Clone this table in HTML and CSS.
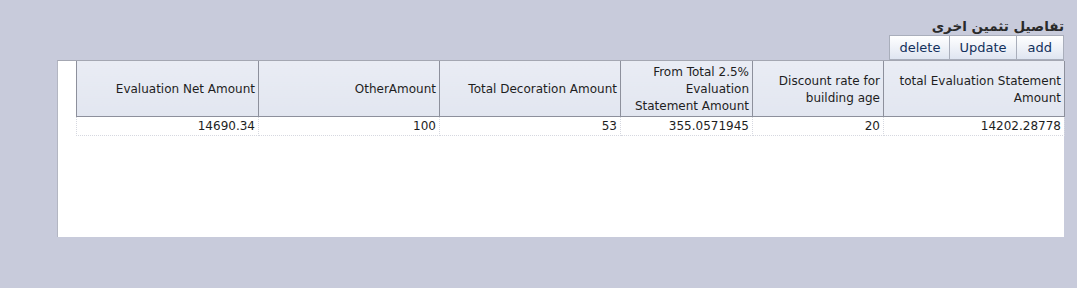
FILE: index.html
```html
<!DOCTYPE html>
<html lang="en">
<head>
    <meta charset="UTF-8">
    <meta name="viewport" content="width=device-width, initial-scale=1.0">
    <link rel="stylesheet" href="styles.css">
    <title>Evaluation Details</title>
</head>
<body>
    <div class="top-section">
        <div class="section-title" dir="rtl">تفاصيل تثمين اخرى</div>
        <div class="actions">
            <button class="action-btn">delete</button>
            <button class="action-btn">Update</button>
            <button class="action-btn">add</button>
        </div>
    </div>
    <div class="grid-panel">
        <table class="details-table">
            <colgroup>
                <col style="width: 182px">
                <col style="width: 181px">
                <col style="width: 181px">
                <col style="width: 132px">
                <col style="width: 131px">
                <col style="width: 181px">
            </colgroup>
            <thead>
                <tr>
                    <th>Evaluation Net Amount</th>
                    <th>OtherAmount</th>
                    <th>Total Decoration Amount</th>
                    <th>From Total 2.5% Evaluation Statement Amount</th>
                    <th>Discount rate for building age</th>
                    <th>total Evaluation Statement Amount</th>
                </tr>
            </thead>
            <tbody>
                <tr>
                    <td>14690.34</td>
                    <td>100</td>
                    <td>53</td>
                    <td>355.0571945</td>
                    <td>20</td>
                    <td>14202.28778</td>
                </tr>
            </tbody>
        </table>
    </div>
</body>
</html>
```

FILE: styles.css
```css
body {
    margin: 0;
    background-color: #c8cbdb;
    font-family: Tahoma, "DejaVu Sans", sans-serif;
    color: #1e1e1e;
}

.top-section {
    display: flex;
    flex-direction: column;
    align-items: flex-end;
    padding: 17px 13px 0 0;
}

.section-title {
    font-family: "DejaVu Sans", sans-serif;
    font-size: 13.5px;
    font-weight: bold;
    color: #2a2a2a;
    height: 18px;
    line-height: 18px;
}

.actions {
    display: flex;
}

.action-btn {
    height: 25px;
    padding: 0 9px;
    font-family: "DejaVu Sans", sans-serif;
    font-size: 13px;
    color: #12305c;
    background: linear-gradient(#ffffff, #dfe5f1);
    border: 1px solid #a9aebb;
    border-left: none;
    cursor: pointer;
}

.action-btn:first-child {
    border-left: 1px solid #a9aebb;
}

.action-btn:last-child {
    padding: 0 11px;
}

.grid-panel {
    margin: 0 13px 0 57px;
    height: 176px;
    padding-left: 18px;
    background-color: #ffffff;
    border-top: 1px solid #a4a7b2;
    border-left: 1px solid #b3b6c2;
    box-shadow: 0 1px 0 #9fa2ae;
}

.details-table {
    width: 100%;
    border-collapse: collapse;
    table-layout: fixed;
    font-family: "DejaVu Sans", sans-serif;
    font-size: 12px;
}

.details-table th {
    height: 53px;
    padding: 2px 3px 0;
    font-weight: normal;
    text-align: right;
    line-height: 17px;
    background: linear-gradient(#e9ecf4, #e2e6f0);
    border: 1px solid #8d909c;
    border-top: none;
}

.details-table td {
    height: 18px;
    padding: 0 3px;
    text-align: right;
    border: 1px dotted #d6d8e0;
}
```
